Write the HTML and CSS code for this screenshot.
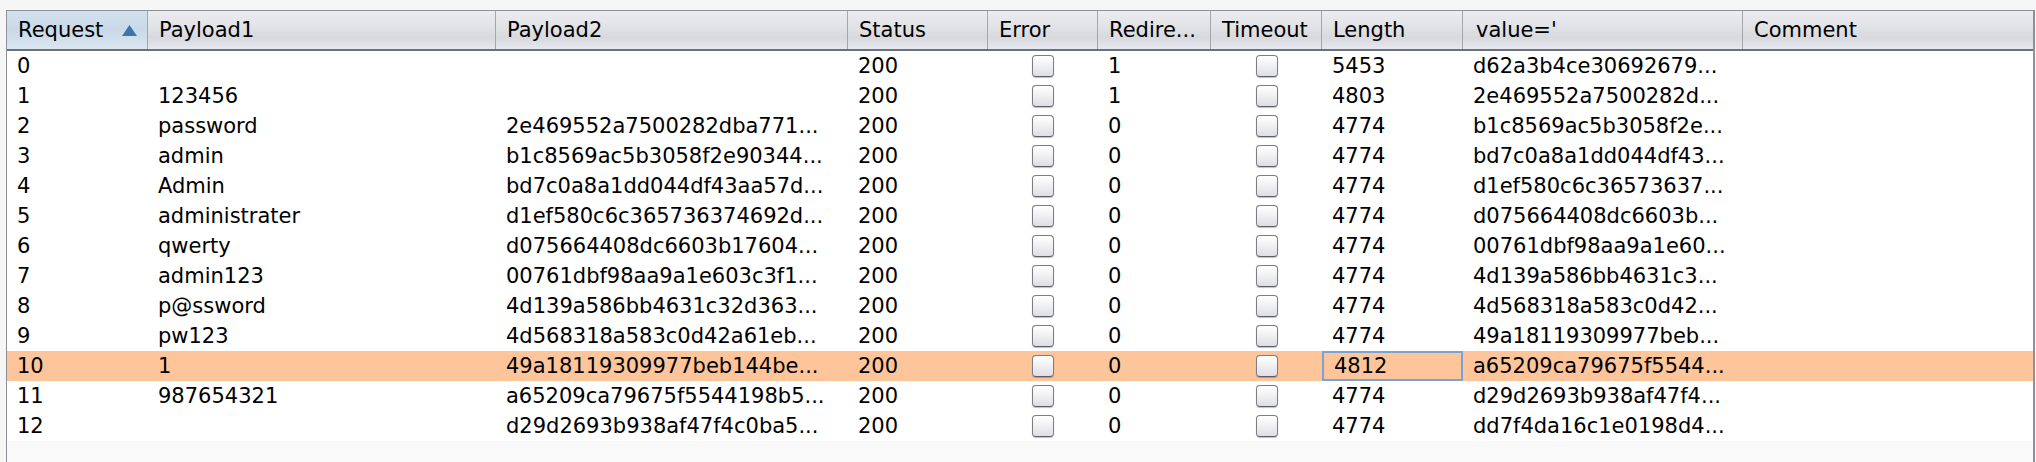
FILE: index.html
```html
<!DOCTYPE html>
<html>
<head>
<meta charset="utf-8">
<link rel="stylesheet" href="styles.css">
</head>
<body>
<div class="table">
  <div class="head">
    <div class="hc sorted"><span>Request</span><svg class="arrow" width="15" height="11" viewBox="0 0 15 11"><polygon points="7.5,0 15,11 0,11" fill="#3f74ab"/></svg></div>
    <div class="hc">Payload1</div>
    <div class="hc">Payload2</div>
    <div class="hc">Status</div>
    <div class="hc">Error</div>
    <div class="hc">Redire...</div>
    <div class="hc">Timeout</div>
    <div class="hc">Length</div>
    <div class="hc val">value='</div>
    <div class="hc last">Comment</div>
  </div>
  <div class="body" id="body"></div>
  <div class="filler"></div>
</div>
<script src="app.js"></script>
</body>
</html>
```
FILE: app.js
```js
const rows = [
  ["0","","","200","1","5453","d62a3b4ce30692679..."],
  ["1","123456","","200","1","4803","2e469552a7500282d..."],
  ["2","password","2e469552a7500282dba771...","200","0","4774","b1c8569ac5b3058f2e..."],
  ["3","admin","b1c8569ac5b3058f2e90344...","200","0","4774","bd7c0a8a1dd044df43..."],
  ["4","Admin","bd7c0a8a1dd044df43aa57d...","200","0","4774","d1ef580c6c36573637..."],
  ["5","administrater","d1ef580c6c365736374692d...","200","0","4774","d075664408dc6603b..."],
  ["6","qwerty","d075664408dc6603b17604...","200","0","4774","00761dbf98aa9a1e60..."],
  ["7","admin123","00761dbf98aa9a1e603c3f1...","200","0","4774","4d139a586bb4631c3..."],
  ["8","p@ssword","4d139a586bb4631c32d363...","200","0","4774","4d568318a583c0d42..."],
  ["9","pw123","4d568318a583c0d42a61eb...","200","0","4774","49a18119309977beb..."],
  ["10","1","49a18119309977beb144be...","200","0","4812","a65209ca79675f5544..."],
  ["11","987654321","a65209ca79675f5544198b5...","200","0","4774","d29d2693b938af47f4..."],
  ["12","","d29d2693b938af47f4c0ba5...","200","0","4774","dd7f4da16c1e0198d4..."]
];
const body = document.getElementById("body");
rows.forEach((r, i) => {
  const row = document.createElement("div");
  row.className = "row" + (i === 10 ? " hl" : "");
  const cells = [
    ["c", r[0]], ["c", r[1]], ["c", r[2]], ["c", r[3]],
    ["c cbc", null], ["c", r[4]], ["c cbc", null], ["c" + (i === 10 ? " focus" : ""), r[5]],
    ["c", r[6]], ["c", ""]
  ];
  cells.forEach(([cls, txt]) => {
    const d = document.createElement("div");
    d.className = cls;
    if (txt === null) {
      const cb = document.createElement("span");
      cb.className = "cb";
      d.appendChild(cb);
    } else {
      d.textContent = txt;
    }
    row.appendChild(d);
  });
  body.appendChild(row);
});
```
FILE: styles.css
```css
html, body {
  margin: 0;
  padding: 0;
  background: #f6f6f6;
}
body {
  padding-top: 10px;
  padding-left: 6px;
  font-family: "DejaVu Sans", Verdana, sans-serif;
  font-size: 21px;
  color: #000;
}
.table {
  width: 2026px;
  height: 451px;
  border-top: 1px solid #8f919a;
  border-left: 1px solid #8f919a;
  border-right: 2px solid #8f919a;
  display: flex;
  flex-direction: column;
  overflow: hidden;
}
.head, .row {
  display: grid;
  grid-template-columns: 141px 348px 352px 140px 110px 113px 111px 141px 280px 1fr;
}
.head {
  height: 38px;
  border-bottom: 2px solid #6f717a;
  background: linear-gradient(#ececef 0%, #e2e3e7 40%, #d8d9de 70%, #e6e8f0 100%);
}
.hc {
  display: flex;
  align-items: center;
  padding-left: 11px;
  border-right: 1px solid #a4a6ae;
  white-space: nowrap;
  overflow: hidden;
}
.hc.last {
  border-right: none;
}
.hc.sorted {
  justify-content: space-between;
  padding-right: 10px;
  background: linear-gradient(#d3e1ee 0%, #c9d9e8 50%, #dbe6f1 100%);
}
.hc.val {
  padding-left: 13px;
}
.arrow {
  display: block;
  margin-top: 1px;
}
.body {
  background: #fff;
}
.row {
  height: 30px;
}
.row.hl {
  background: #fec59a;
}
.c {
  display: flex;
  align-items: center;
  padding-left: 10px;
  white-space: nowrap;
  overflow: hidden;
  box-sizing: border-box;
}
.c.cbc {
  justify-content: center;
  padding-left: 0;
}
.c.focus {
  border: 2px solid #7aa3d1;
  padding-left: 10px;
}
.cb {
  width: 20px;
  height: 20px;
  border: 1px solid #7c7d84;
  border-bottom-color: #5d5e64;
  border-radius: 4px;
  background: linear-gradient(#ffffff 0%, #f3f3f5 40%, #dedfe4 100%);
  box-shadow: 0 1px 1px rgba(0,0,0,0.25);
}
.filler {
  flex: 1;
  background: #f9f9f9;
}
```
